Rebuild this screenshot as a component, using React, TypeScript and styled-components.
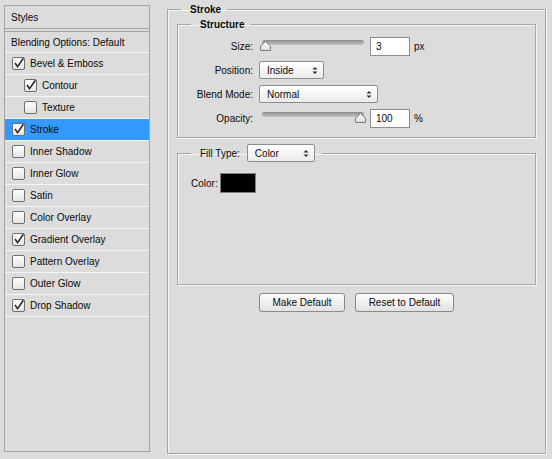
import React from "react";
import styled, { createGlobalStyle } from "styled-components";

const GlobalStyle = createGlobalStyle`
  html, body {
    margin: 0;
    padding: 0;
    background: #dcdcdc;
  }
  body {
    font-family: "Liberation Sans", Arial, sans-serif;
    font-size: 10px;
    color: #0a0a0a;
  }
  * {
    box-sizing: border-box;
  }
`;

const Dialog = styled.div`
  display: flex;
  align-items: flex-start;
  width: 552px;
  height: 459px;
  padding-left: 4px;
  overflow: hidden;
`;

/* ---------- left: list of layer styles ---------- */

const StyleList = styled.div`
  margin-top: 5px;
  width: 146px;
  height: 447px;
  border: 1px solid #a3a3a3;
  display: flex;
  flex-direction: column;
  flex-shrink: 0;
`;

const ListHeader = styled.div`
  height: 26px;
  border-bottom: 4px double #a3a3a3;
  padding-left: 6px;
  display: flex;
  align-items: center;
`;

const BlendingRow = styled.div`
  height: 21px;
  border-bottom: 1px solid #f4f4f4;
  padding-left: 6px;
  display: flex;
  align-items: center;
`;

const StyleRow = styled.div<{ $indent?: boolean; $selected?: boolean }>`
  height: 22px;
  border-bottom: 1px solid #f4f4f4;
  padding-left: ${(p) => (p.$indent ? 19 : 7)}px;
  display: flex;
  align-items: center;
  gap: 5px;
  background: ${(p) => (p.$selected ? "#3399ff" : "transparent")};
`;

const Box = styled.span`
  position: relative;
  width: 13px;
  height: 13px;
  border: 1px solid #6f6f6f;
  border-radius: 2px;
  background: linear-gradient(#ffffff, #e4e4e4);
  flex-shrink: 0;
`;

const Tick = styled.svg`
  position: absolute;
  left: 0;
  top: -2px;
`;

const CheckBox = ({ checked }: { checked: boolean }) => (
  <Box>
    {checked && (
      <Tick width="13" height="13" viewBox="0 0 13 13">
        <path
          d="M2 7 L4.6 10.6 L10.4 2.2"
          fill="none"
          stroke="#2b2b2b"
          strokeWidth="1.6"
          strokeLinejoin="miter"
        />
      </Tick>
    )}
  </Box>
);

/* ---------- right: stroke settings ---------- */

const Group = styled.fieldset`
  margin: 0;
  padding: 0;
  min-width: 0;
  border: 1px solid #a6a6a6;
  box-shadow: inset 1px 1px 0 #f6f6f6, 1px 1px 0 #f6f6f6;
`;

const MainGroup = styled(Group)`
  margin: 3px 0 0 17px;
  width: 379px;
  height: 451px;
  flex-shrink: 0;
`;

const GroupTitle = styled.legend`
  margin-left: 13px;
  padding: 0 6px 0 9px;
  font-weight: bold;
  line-height: 13px;
`;

const MainBody = styled.div`
  padding: 2px 9px 0 9px;
  display: flex;
  flex-direction: column;
`;

const StructureBody = styled.div`
  padding: 3px 0 7px 0;
  display: flex;
  flex-direction: column;
`;

const FieldRow = styled.div`
  height: 24px;
  display: flex;
  align-items: center;
`;

const FieldLabel = styled.span`
  width: 75px;
  margin-right: 6px;
  text-align: right;
`;

const Unit = styled.span`
  margin-left: 4px;
`;

const SliderBox = styled.div`
  position: relative;
  width: 107px;
  height: 11px;
  margin-top: -1px;
`;

const Track = styled.div`
  position: absolute;
  left: 3px;
  right: 2px;
  top: 0;
  height: 5px;
  border-radius: 3px;
  background: linear-gradient(#8a8a8a, #b4b4b4 70%, #c6c6c6);
`;

const Thumb = styled.svg`
  position: absolute;
  top: 1px;
`;

const Slider = ({ value, max }: { value: number; max: number }) => (
  <SliderBox>
    <Track />
    <Thumb
      width="11"
      height="10"
      viewBox="0 0 11 10"
      style={{ left: Math.round((value / max) * 96) }}
    >
      <defs>
        <linearGradient id="thumbFill" x1="0" y1="0" x2="0" y2="1">
          <stop offset="0" stopColor="#ffffff" />
          <stop offset="1" stopColor="#dadada" />
        </linearGradient>
      </defs>
      <path
        d="M0.5 9 L0.5 5 L5.5 0.6 L10.5 5 L10.5 9 Q10.5 9.5 10 9.5 L1 9.5 Q0.5 9.5 0.5 9 Z"
        fill="url(#thumbFill)"
        stroke="#7a7a7a"
        strokeWidth="1"
      />
    </Thumb>
  </SliderBox>
);

const NumberField = styled.div`
  margin-left: 4px;
  width: 40px;
  height: 19px;
  border: 1px solid #8d8d8d;
  background: #ffffff;
  padding-left: 5px;
  display: flex;
  align-items: center;
`;

const SelectBox = styled.div<{ $width: number }>`
  width: ${(p) => p.$width}px;
  height: 18px;
  border: 1px solid #8e8e8e;
  border-radius: 2px;
  background: linear-gradient(#ffffff, #ebebeb);
  display: flex;
  align-items: center;
  justify-content: space-between;
  padding: 0 5px 0 7px;
`;

const Arrows = () => (
  <svg width="6" height="9" viewBox="0 0 6 9">
    <path d="M0.5 3.6 L3 1 L5.5 3.6 Z" fill="#2e2e2e" />
    <path d="M0.5 5.4 L3 8 L5.5 5.4 Z" fill="#2e2e2e" />
  </svg>
);

const Select = ({ value, width }: { value: string; width: number }) => (
  <SelectBox $width={width}>
    <span>{value}</span>
    <Arrows />
  </SelectBox>
);

const FillGroup = styled(Group)`
  margin-top: 6px;
`;

const FillTitle = styled.legend`
  margin-left: 13px;
  padding: 0 7px 0 9px;
`;

const FillTitleInner = styled.span`
  display: inline-flex;
  align-items: center;
  gap: 7px;
`;

const FillBody = styled.div`
  height: 122px;
  padding: 11px 0 0 13px;
`;

const ColorRow = styled.div`
  display: flex;
  align-items: center;
  gap: 2px;
`;

const Swatch = styled.div<{ $color: string }>`
  width: 36px;
  height: 20px;
  border: 1px solid #7f7f7f;
  background: ${(p) => p.$color};
`;

const ButtonRow = styled.div`
  margin-top: 8px;
  display: flex;
  justify-content: center;
  gap: 10px;
`;

const PushButton = styled.button<{ $width: number }>`
  width: ${(p) => p.$width}px;
  height: 19px;
  padding: 0;
  border: 1px solid #8a8a8a;
  border-radius: 3px;
  background: linear-gradient(#fefefe, #e2e2e2);
  font-family: inherit;
  font-size: 10px;
  color: #0a0a0a;
`;

const styles: { name: string; checked: boolean; indent?: boolean; selected?: boolean }[] = [
  { name: "Bevel & Emboss", checked: true },
  { name: "Contour", checked: true, indent: true },
  { name: "Texture", checked: false, indent: true },
  { name: "Stroke", checked: true, selected: true },
  { name: "Inner Shadow", checked: false },
  { name: "Inner Glow", checked: false },
  { name: "Satin", checked: false },
  { name: "Color Overlay", checked: false },
  { name: "Gradient Overlay", checked: true },
  { name: "Pattern Overlay", checked: false },
  { name: "Outer Glow", checked: false },
  { name: "Drop Shadow", checked: true },
];

export default function App() {
  return (
    <>
      <GlobalStyle />
      <Dialog>
        <StyleList>
          <ListHeader>Styles</ListHeader>
          <BlendingRow>Blending Options: Default</BlendingRow>
          {styles.map((s) => (
            <StyleRow key={s.name} $indent={s.indent} $selected={s.selected}>
              <CheckBox checked={s.checked} />
              <span>{s.name}</span>
            </StyleRow>
          ))}
        </StyleList>

        <MainGroup>
          <GroupTitle>Stroke</GroupTitle>
          <MainBody>
            <Group>
              <GroupTitle>Structure</GroupTitle>
              <StructureBody>
                <FieldRow>
                  <FieldLabel>Size:</FieldLabel>
                  <Slider value={3} max={250} />
                  <NumberField>3</NumberField>
                  <Unit>px</Unit>
                </FieldRow>
                <FieldRow>
                  <FieldLabel>Position:</FieldLabel>
                  <Select value="Inside" width={65} />
                </FieldRow>
                <FieldRow>
                  <FieldLabel>Blend Mode:</FieldLabel>
                  <Select value="Normal" width={119} />
                </FieldRow>
                <FieldRow>
                  <FieldLabel>Opacity:</FieldLabel>
                  <Slider value={100} max={100} />
                  <NumberField>100</NumberField>
                  <Unit>%</Unit>
                </FieldRow>
              </StructureBody>
            </Group>

            <FillGroup>
              <FillTitle>
                <FillTitleInner>
                  <span>Fill Type:</span>
                  <Select value="Color" width={68} />
                </FillTitleInner>
              </FillTitle>
              <FillBody>
                <ColorRow>
                  <span>Color:</span>
                  <Swatch $color="#000000" />
                </ColorRow>
              </FillBody>
            </FillGroup>

            <ButtonRow>
              <PushButton $width={86}>Make Default</PushButton>
              <PushButton $width={99}>Reset to Default</PushButton>
            </ButtonRow>
          </MainBody>
        </MainGroup>
      </Dialog>
    </>
  );
}
